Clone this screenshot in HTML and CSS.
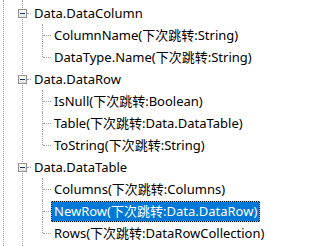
FILE: index.html
```html
<!DOCTYPE html>
<html lang="zh-CN">
<head>
    <meta charset="UTF-8">
    <title>TreeView</title>
    <link rel="stylesheet" href="styles.css">
</head>
<body>
    <div class="tree">
        <ul class="level">
            <li>
                <div class="row"><span class="toggle"></span><span class="stub"></span><span class="label">Data.DataColumn</span></div>
                <ul class="children">
                    <li><div class="row"><span class="label">ColumnName(下次跳转:String)</span></div></li>
                    <li><div class="row"><span class="label">DataType.Name(下次跳转:String)</span></div></li>
                </ul>
            </li>
            <li>
                <div class="row"><span class="toggle"></span><span class="stub"></span><span class="label">Data.DataRow</span></div>
                <ul class="children">
                    <li><div class="row"><span class="label">IsNull(下次跳转:Boolean)</span></div></li>
                    <li><div class="row"><span class="label">Table(下次跳转:Data.DataTable)</span></div></li>
                    <li><div class="row"><span class="label">ToString(下次跳转:String)</span></div></li>
                </ul>
            </li>
            <li>
                <div class="row"><span class="toggle"></span><span class="stub"></span><span class="label">Data.DataTable</span></div>
                <ul class="children">
                    <li><div class="row"><span class="label">Columns(下次跳转:Columns)</span></div></li>
                    <li><div class="row"><span class="label selected">NewRow(下次跳转:Data.DataRow)</span></div></li>
                    <li><div class="row"><span class="label">Rows(下次跳转:DataRowCollection)</span></div></li>
                </ul>
            </li>
        </ul>
    </div>
</body>
</html>
```

FILE: styles.css
```css
html, body {
    margin: 0;
    background-color: #fff;
    font-family: "Noto Sans", "Noto Sans CJK SC", sans-serif;
    font-size: 13px;
    color: #000;
}
.tree {
    height: 246px;
    overflow: hidden;
    margin-left: 3px;
    border-left: 1px dotted #a0a0a0;
}
ul {
    list-style: none;
    margin: 0;
    padding: 0;
}
.level {
    margin-left: 18px;
    padding-top: 2px;
    border-left: 1px dotted #a0a0a0;
    min-height: 246px;
}
.row {
    height: 22px;
    display: flex;
    align-items: center;
    white-space: nowrap;
}
.toggle {
    box-sizing: border-box;
    width: 9px;
    height: 9px;
    margin-left: -5px;
    border: 1px solid #919191;
    background: linear-gradient(#ffffff, #e4e4e4);
    display: flex;
    align-items: center;
    justify-content: center;
}
.toggle::after {
    content: "";
    width: 5px;
    height: 1px;
    background-color: #1e395b;
}
.stub {
    width: 4px;
    border-top: 1px dotted #a0a0a0;
}
.label {
    box-sizing: border-box;
    height: 21px;
    line-height: 19px;
    padding: 0 2px;
    border: 1px solid transparent;
}
.label.selected {
    color: #fff;
    border: 1px dotted #f7a21b;
    background: linear-gradient(#0078d7, #0078d7) padding-box, #000;
}
.children {
    margin-left: 19px;
}
.children li {
    position: relative;
    border-left: 1px dotted #a0a0a0;
}
.children li:last-child {
    border-left-color: transparent;
}
.children li:last-child::before {
    content: "";
    position: absolute;
    left: -1px;
    top: 0;
    height: 11px;
    border-left: 1px dotted #a0a0a0;
}
.children .row::before {
    content: "";
    width: 8px;
    border-top: 1px dotted #a0a0a0;
}
```
